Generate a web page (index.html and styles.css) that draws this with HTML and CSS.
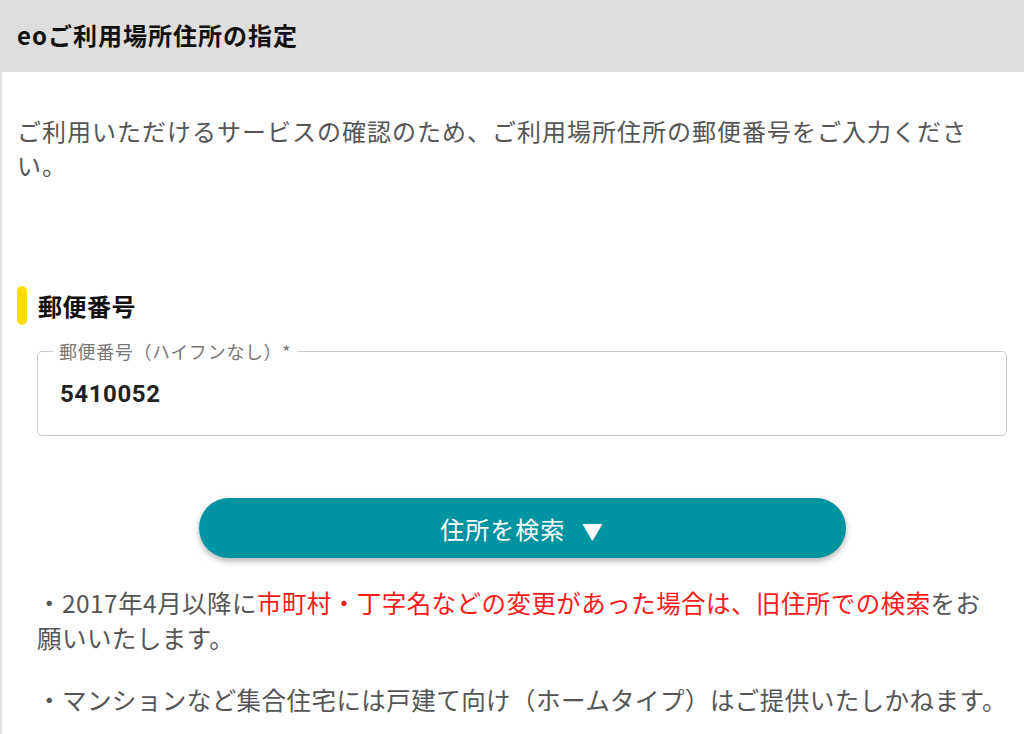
FILE: index.html
```html
<!DOCTYPE html>
<html lang="ja">
<head>
<meta charset="utf-8">
<title>eoご利用場所住所の指定</title>
<link rel="stylesheet" href="styles.css">
</head>
<body>
<header class="hd">
  <h1 class="hd-title">eoご利用場所住所の指定</h1>
</header>
<main class="content">
  <p class="intro">ご利用いただけるサービスの確認のため、ご利用場所住所の郵便番号をご入力ください。</p>

  <div class="sec">
    <span class="sec-bar"></span>
    <h2 class="sec-title">郵便番号</h2>
  </div>

  <fieldset class="field">
    <legend class="field-label">郵便番号（ハイフンなし）*</legend>
    <input class="field-input" type="text" value="5410052">
  </fieldset>

  <div class="btn-row">
    <button class="btn" type="button">住所を検索 <span class="btn-arrow">▼</span></button>
  </div>

  <p class="note">・2017年4月以降に<span class="red">市町村・丁字名などの変更があった場合は、旧住所での検索</span>をお<br>願いいたします。</p>
  <p class="note note2">・マンションなど集合住宅には戸建て向け（ホームタイプ）はご提供いたしかねます。</p>
</main>
</body>
</html>
```

FILE: styles.css
```css
html, body {
  margin: 0;
  padding: 0;
  background: #ffffff;
}
body {
  font-family: "Noto Sans CJK JP", "Noto Sans", sans-serif;
  color: #555555;
  overflow: hidden;
  height: 100vh;
  display: flex;
  flex-direction: column;
}
.hd {
  flex: none;
  height: 72px;
  background: #dedede;
  display: flex;
  align-items: center;
  padding-left: 17px;
}
.hd-title {
  margin: 0 0 2px;
  font-size: 24px;
  font-weight: 700;
  letter-spacing: 1px;
  color: #111111;
  line-height: 1;
}
.content {
  flex: 1;
  border-left: 2px solid #e2e2e2;
  padding: 42px 17px 0 15px;
}
.intro {
  margin: 0;
  max-width: 972px;
  font-size: 24px;
  letter-spacing: 1px;
  line-height: 34px;
  color: #555555;
}
.sec {
  margin-top: 104px;
  display: flex;
  align-items: center;
  gap: 10px;
  height: 39px;
}
.sec-bar {
  width: 10px;
  height: 39px;
  border-radius: 5px;
  background: #ffdd00;
}
.sec-title {
  margin: 0 0 0 1px;
  font-size: 24px;
  font-weight: 700;
  letter-spacing: 0.5px;
  color: #111111;
  line-height: 1;
}
.field {
  margin: 14px 0 0 20px;
  padding: 0 15px 13px;
  border: 1px solid #cccccc;
  border-radius: 5px;
  min-width: 0;
}
.field-label {
  padding: 0 6px;
  font-size: 18px;
  line-height: 24px;
  color: #777777;
  letter-spacing: 0.6px;
}
.field-input {
  display: block;
  box-sizing: border-box;
  width: 100%;
  height: 56px;
  margin-top: 3px;
  padding: 0 7px;
  border: none;
  outline: none;
  background: transparent;
  font-family: Roboto, "Noto Sans", sans-serif;
  font-size: 24px;
  font-weight: 700;
  letter-spacing: 0.6px;
  color: #222222;
}
.btn-row {
  margin: 62px 0 0 20px;
  display: flex;
  justify-content: center;
}
.btn {
  width: 647px;
  height: 60px;
  border: none;
  border-radius: 30px;
  background: #0093a0;
  color: #ffffff;
  font-family: "Noto Sans CJK JP", sans-serif;
  font-size: 24px;
  font-weight: 400;
  letter-spacing: 1px;
  box-shadow: 0 3px 6px rgba(0, 0, 0, 0.3);
  cursor: pointer;
}
.btn-arrow {
  margin-left: 10px;
  font-size: 21px;
}
.note {
  margin: 27px 0 0 20px;
  font-size: 24.5px;
  letter-spacing: 0.45px;
  line-height: 35px;
  color: #555555;
  white-space: nowrap;
}
.note2 {
  margin-top: 27px;
}
.red {
  color: #ff1a1a;
}
```
